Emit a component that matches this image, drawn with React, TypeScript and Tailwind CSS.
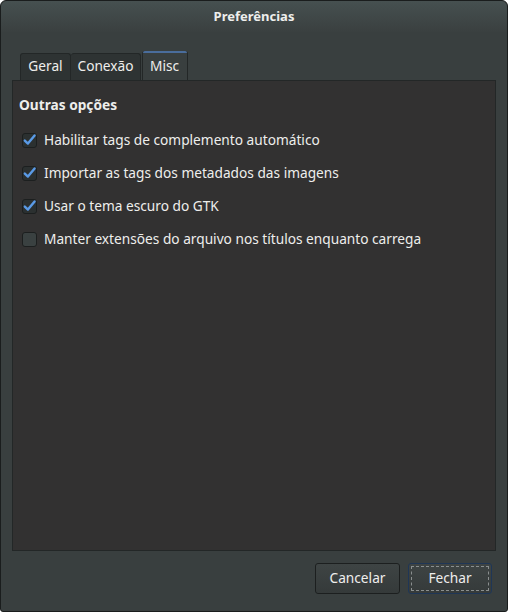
import React from 'react';

const font = { fontFamily: '"Noto Sans", "Open Sans", sans-serif' };

function Tab({ label, active = false, className = '' }: { label: string; active?: boolean; className?: string }) {
  if (active) {
    return (
      <div className={`-mb-px flex h-[30px] flex-col rounded-t-[3px] border-x border-[#232727] bg-[#393f3f] ${className}`.trim()}>
        <div className="h-[2px] rounded-t-[3px] bg-[#4a6d9c]" />
        <div className="flex flex-1 items-center px-[7px] pb-[2px] text-[13.7px] text-[#eeeeec]">{label}</div>
      </div>
    );
  }
  return (
    <div
      className={`flex h-[27px] items-center rounded-t-[3px] border-x border-t border-[#232727] bg-[#2e3333] px-[7px] pb-[1px] text-[13.7px] text-[#eeeeec] ${className}`.trim()}
    >
      {label}
    </div>
  );
}

function Check({ checked, label }: { checked: boolean; label: string }) {
  return (
    <div className="flex h-[33px] items-center">
      <div
        className={`ml-[3px] flex h-[15px] w-[15px] items-center justify-center rounded-[3px] border border-[#1c1f1f] ${
          checked ? 'bg-[#2b3030]' : 'bg-[#3a4141]'
        }`}
      >
        {checked ? (
          <svg width="15" height="15" viewBox="0 0 15 15" className="overflow-visible">
            <path d="M2.8 7.6 L5.9 10.6 L12.6 2.4" fill="none" stroke="#5a9ae6" strokeWidth="2.4" strokeLinecap="round" strokeLinejoin="round" />
          </svg>
        ) : null}
      </div>
      <span className="ml-[7px] text-[13.7px] text-[#eeeeec]">{label}</span>
    </div>
  );
}

export default function App() {
  return (
    <div className="h-[612px] w-[508px] bg-white" style={font}>
      <div className="flex h-full w-full flex-col rounded-t-[6px] rounded-b-[3px] border border-[#1a1d1d] bg-[#393f3f]">
        <div className="flex h-[31px] items-center justify-center rounded-t-[6px] bg-gradient-to-b from-[#465050] to-[#3a4040] text-[13px] font-bold text-[#eeeeec]">
          Preferências
        </div>
        <div className="mx-[11px] mt-[19px] flex flex-1 flex-col">
          <div className="flex items-end pl-[8px]">
            <Tab label="Geral" className="w-[51px] justify-center" />
            <Tab label="Conexão" className="w-[70px] justify-center border-l-0" />
            <Tab label="Misc" active className="ml-[1px] w-[46px]" />
          </div>
          <div className="flex-1 border border-[#232727] bg-[#323131] px-[6px] pt-[14px]">
            <p className="mb-[8px] text-[13.7px] font-bold text-[#eeeeec]">Outras opções</p>
            <Check checked label="Habilitar tags de complemento automático" />
            <Check checked label="Importar as tags dos metadados das imagens" />
            <Check checked label="Usar o tema escuro do GTK" />
            <Check checked={false} label="Manter extensões do arquivo nos títulos enquanto carrega" />
          </div>
        </div>
        <div className="flex justify-end gap-[8px] pl-[16px] pr-[15px] pb-[17px] pt-[12px]">
          <button
            type="button"
            className="h-[31px] w-[85px] rounded-[3px] border border-[#1c1f1f] bg-gradient-to-b from-[#3e4444] to-[#353a3a] text-[13.7px] text-[#eeeeec]"
          >
            Cancelar
          </button>
          <button
            type="button"
            className="h-[31px] w-[84px] rounded-[3px] border border-[#1f3656] bg-gradient-to-b from-[#3e4444] to-[#353a3a] p-[2px] text-[13.7px] text-[#eeeeec]"
          >
            <span className="flex h-full w-full items-center justify-center border border-dashed border-[#8a8f8f]">Fechar</span>
          </button>
        </div>
      </div>
    </div>
  );
}
